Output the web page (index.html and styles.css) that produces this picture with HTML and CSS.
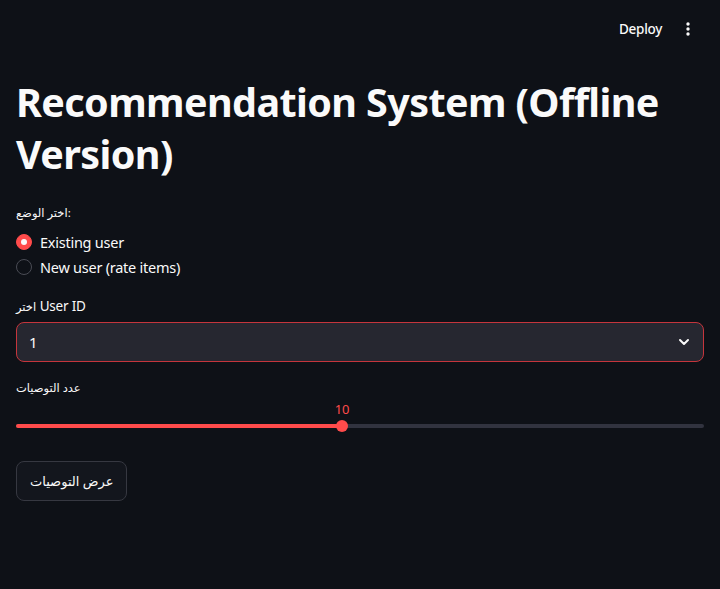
FILE: index.html
```html
<!DOCTYPE html>
<html lang="en">
<head>
<meta charset="utf-8">
<link rel="stylesheet" href="styles.css">
</head>
<body>
<header class="topbar">
  <span class="deploy">Deploy</span>
  <span class="kebab" aria-label="menu">
    <svg width="16" height="16" viewBox="0 0 16 16"><circle cx="8" cy="3" r="1.7" fill="#fafafa"/><circle cx="8" cy="8" r="1.7" fill="#fafafa"/><circle cx="8" cy="13" r="1.7" fill="#fafafa"/></svg>
  </span>
</header>
<main class="main">
  <h1 class="title">Recommendation System (Offline Version)</h1>

  <div class="field radio-field">
    <div class="label"><span class="ar">اختر الوضع:</span></div>
    <div class="radios">
      <div class="radio checked"><span class="dot"></span><span class="rtext">Existing user</span></div>
      <div class="radio"><span class="dot"></span><span class="rtext">New user (rate items)</span></div>
    </div>
  </div>

  <div class="field select-field">
    <div class="label"><span class="ar">اختر</span> User ID</div>
    <div class="select">
      <span class="value">1</span>
      <svg class="chev" width="14" height="14" viewBox="0 0 14 14"><path d="M3 5 L7 9 L11 5" fill="none" stroke="#fafafa" stroke-width="2" stroke-linecap="round" stroke-linejoin="round"/></svg>
    </div>
  </div>

  <div class="field">
    <div class="label"><span class="ar">عدد التوصيات</span></div>
    <div class="slider">
      <div class="track">
        <div class="fill" style="width:47.4%"></div>
        <div class="thumb" style="left:47.4%"><span class="tval">10</span></div>
      </div>
    </div>
  </div>

  <button class="btn"><span class="ar-btn">عرض التوصيات</span></button>
</main>
</body>
</html>
```
FILE: styles.css
```css
* { box-sizing: border-box; }
html, body { margin: 0; padding: 0; }
body {
  background: #0e1117;
  color: #fafafa;
  font-family: "Noto Sans", "Open Sans", "DejaVu Sans", sans-serif;
  width: 720px;
  height: 589px;
  overflow: hidden;
}
.topbar {
  height: 60px;
  display: flex;
  align-items: center;
  justify-content: flex-end;
  padding-right: 24px;
  gap: 18px;
}
.deploy {
  font-size: 13.5px;
  font-weight: 500;
  letter-spacing: -0.3px;
  margin-top: -2px;
}
.kebab { display: flex; margin-top: -2px; }
.main { padding: 16px 16px 0 16px; }
.title {
  margin: 0;
  font-size: 39.5px;
  font-weight: 700;
  line-height: 52px;
  letter-spacing: -0.6px;
  padding-bottom: 22px;
}
.field { margin-bottom: 16px; }
.label {
  font-size: 13.5px;
  line-height: 20px;
  height: 24px;
  letter-spacing: -0.2px;
}
.ar { font-size: 11.5px; letter-spacing: 0; }
.radios { display: flex; flex-direction: column; gap: 1px; margin-top: 4px; }
.radio { display: flex; align-items: center; height: 24px; gap: 8px; }
.dot {
  width: 16px; height: 16px; border-radius: 50%;
  border: 1px solid #4a4c55;
  background: #0e1117;
  position: relative;
  flex: none;
}
.radio.checked .dot { background: #ff4b4b; border-color: #ff4b4b; }
.radio.checked .dot::after {
  content: ""; position: absolute; left: 4px; top: 4px;
  width: 6px; height: 6px; border-radius: 50%; background: #fafafa;
}
.rtext { font-size: 14.5px; line-height: 24px; letter-spacing: -0.25px; }
.radio-field { margin-bottom: 17px; }
.select-field .label { height: 26px; }
.select {
  height: 40px;
  background: #262730;
  border: 1px solid #c5353c;
  border-radius: 8px;
  display: flex;
  align-items: center;
  justify-content: space-between;
  padding: 0 12px 0 12px;
  font-size: 15px;
}
.select-field { margin-bottom: 15px; }
.slider { height: 40px; padding-top: 23px; }
.track {
  position: relative;
  height: 4px;
  background: #31333f;
  border-radius: 2px;
}
.fill { height: 4px; background: #ff4b4b; border-radius: 2px; }
.thumb {
  position: absolute;
  top: -4px;
  width: 12px; height: 12px;
  margin-left: -6px;
  background: #ff4b4b;
  border-radius: 50%;
}
.tval {
  position: absolute;
  bottom: 14px;
  left: 50%;
  transform: translateX(-50%);
  color: #ff4b4b;
  font-size: 13px;
}
.btn {
  margin-top: 20px;
  height: 40px;
  padding: 0 13px;
  background: #13161d;
  color: #fafafa;
  border: 1px solid #363841;
  border-radius: 8px;
  font-family: "Noto Sans", "DejaVu Sans", sans-serif;
  display: flex;
  align-items: center;
}
.ar-btn { font-size: 13px; }
```
